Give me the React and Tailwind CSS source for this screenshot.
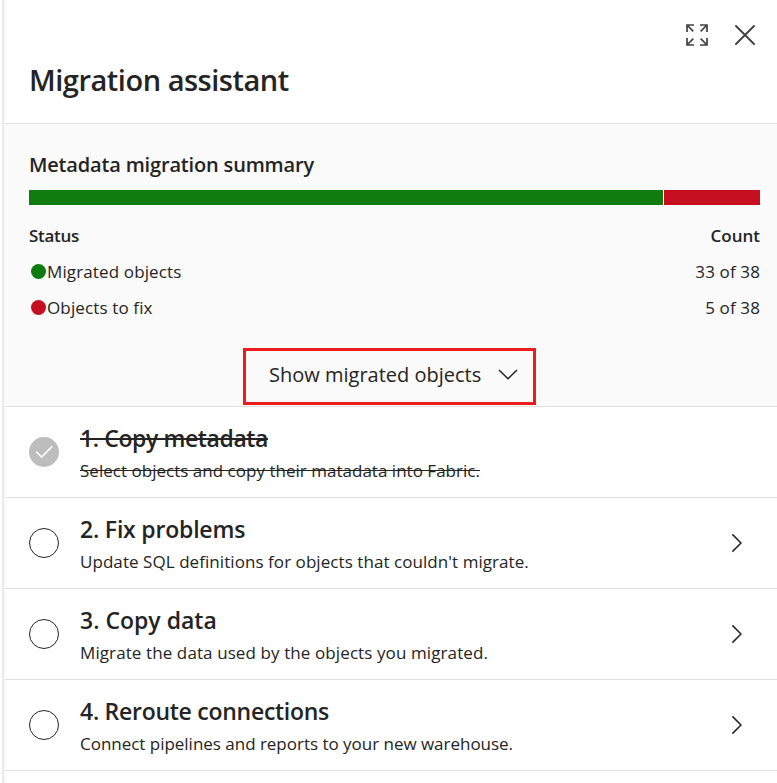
const steps = [
  { title: '1. Copy metadata', text: 'Select objects and copy their matadata into Fabric.', done: true, t: 'tracking-[-0.4px]', s: 'tracking-[0.02px]' },
  { title: '2. Fix problems', text: "Update SQL definitions for objects that couldn't migrate.", t: 'tracking-[-0.2px]', s: 'tracking-[0.06px]' },
  { title: '3. Copy data', text: 'Migrate the data used by the objects you migrated.', t: 'tracking-[0px]', s: 'tracking-[0.1px]' },
  { title: '4. Reroute connections', text: 'Connect pipelines and reports to your new warehouse.', t: 'tracking-[-0.27px]', s: 'tracking-[-0.02px]' },
];

const statuses = [
  { label: 'Migrated objects', count: '33 of 38', dot: 'bg-[#107c10]' },
  { label: 'Objects to fix', count: '5 of 38', dot: 'bg-[#c50f1f]' },
];

function ExpandIcon() {
  return (
    <svg width="22" height="22" viewBox="0 0 22 22" fill="none" stroke="#424242" strokeWidth="1.7">
      <path d="M1 8V1H8M1 1L7.3 7.3M14 1H21V8M21 1L14.7 7.3M1 14V21H8M1 21L7.3 14.7M14 21H21V14M21 21L14.7 14.7" />
    </svg>
  );
}

function CloseIcon() {
  return (
    <svg width="20" height="20" viewBox="0 0 20 20" fill="none" stroke="#424242" strokeWidth="1.9" strokeLinecap="round">
      <path d="M1 1L19 19M19 1L1 19" />
    </svg>
  );
}

function Step({ step }) {
  return (
    <li className="flex h-[91px] items-center border-b border-[#e0e0e0] pl-6 pr-[35px]">
      {step.done ? (
        <svg className="shrink-0" width="30" height="30" viewBox="0 0 30 30" fill="none">
          <circle cx="15" cy="15" r="15" fill="#bdbdbd" />
          <path d="M7.2 14.5L12.6 20L23.2 9.4" stroke="#fff" strokeWidth="1.6" />
        </svg>
      ) : (
        <span className="size-[30px] shrink-0 rounded-full border border-[#242424]" />
      )}
      <div className={step.done ? 'ml-[21px] grow pt-1 line-through' : 'ml-[21px] grow pt-1'}>
        <h3 className={`text-[23px] leading-8 font-semibold ${step.t}`}>{step.title}</h3>
        <p className={`mt-px text-[17px] leading-8 ${step.s}`}>{step.text}</p>
      </div>
      {!step.done && (
        <svg width="11" height="20" viewBox="0 0 11 20" fill="none" stroke="#242424" strokeWidth="1.5">
          <path d="M1.4 1.4L10 10L1.4 18.6" />
        </svg>
      )}
    </li>
  );
}

export default function App() {
  return (
    <div className="h-[783px] w-[777px] overflow-hidden bg-white pl-0.5 font-['Open_Sans','Noto_Sans',sans-serif] text-[#242424]">
      <div className="h-full border-l-2 border-[#ebebeb] bg-[#f7f7f7] pl-px">
        <main className="h-full bg-white">
          <header className="h-[124px] border-b border-[#e0e0e0] pt-6 pr-[22px] pl-6">
            <div className="flex h-[22px] items-center justify-end gap-[27px]">
              <button><ExpandIcon /></button>
              <button><CloseIcon /></button>
            </div>
            <h1 className="mt-[14px] text-[29px] leading-10 font-semibold tracking-[-0.48px]">Migration assistant</h1>
          </header>
          <section className="h-[283px] border-b border-[#e0e0e0] bg-[#fafafa] pr-[17px] pl-6 pt-[26px]">
            <h2 className="text-[20px] leading-[30px] font-semibold tracking-[-0.17px]">Metadata migration summary</h2>
            <div className="mt-[10px] flex h-[15px] gap-px">
              <div className="w-[634px] bg-[#107c10]" />
              <div className="grow bg-[#c50f1f]" />
            </div>
            <div className="mt-[13px] flex h-9 items-center justify-between text-[17px] font-semibold">
              <span className="tracking-[-0.3px]">Status</span>
              <span>Count</span>
            </div>
            {statuses.map((s) => (
              <div key={s.label} className="flex h-9 items-center justify-between text-[17px] tracking-[0.13px]">
                <span className="flex items-center">
                  <span className={`mr-[1.5px] mb-0.5 ml-[1.5px] size-[15px] rounded-full ${s.dot}`} />
                  {s.label}
                </span>
                <span>{s.count}</span>
              </div>
            ))}
            <button className="mt-[22px] ml-[214px] flex h-[57px] w-[293px] items-center border-3 border-[#ed1c1c] pl-[23px] pr-[15px] pb-1 text-[20px]">
              <span className="grow text-left">Show migrated objects</span>
              <svg width="20" height="11" viewBox="0 0 20 11" fill="none" stroke="#242424" strokeWidth="1.5">
                <path d="M1 1L10 9.8L19 1" />
              </svg>
            </button>
          </section>
          <ul>
            {steps.map((step) => <Step key={step.title} step={step} />)}
          </ul>
        </main>
      </div>
    </div>
  );
}
